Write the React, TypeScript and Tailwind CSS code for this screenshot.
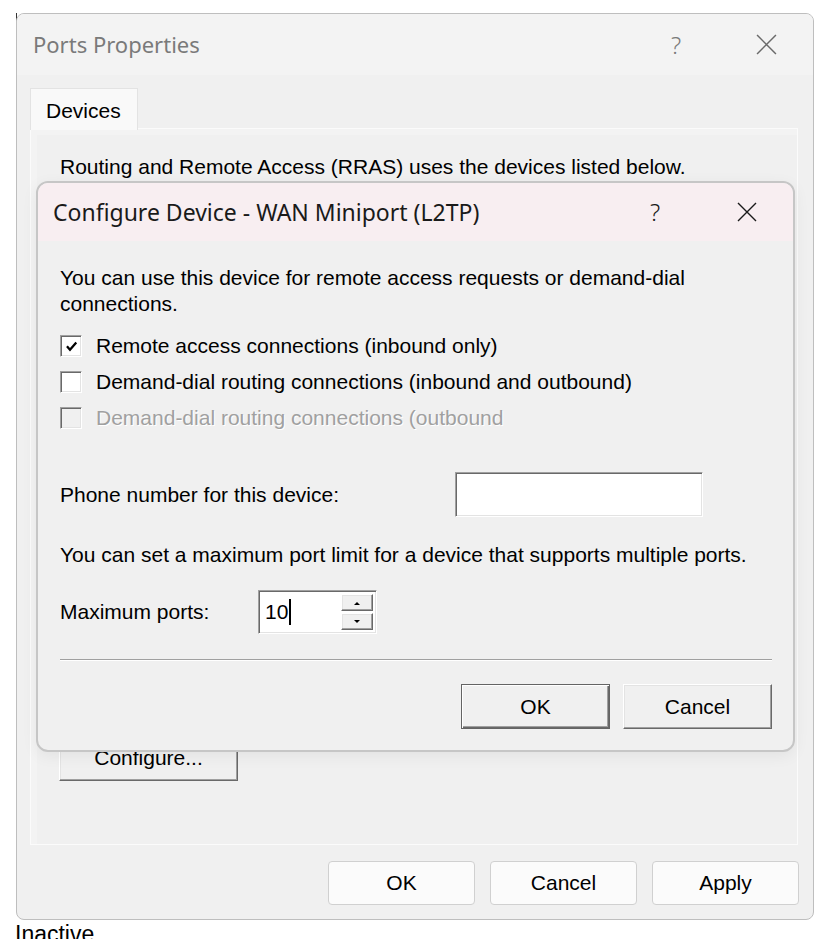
import React from "react"

/* classic 3D edges */
const sunken =
  "border border-t-[#a0a0a0] border-l-[#a0a0a0] border-b-white border-r-white shadow-[inset_1px_1px_0_#696969,inset_-1px_-1px_0_#e3e3e3]"
const raised =
  "border border-t-white border-l-white border-b-[#696969] border-r-[#696969] shadow-[inset_-1px_-1px_0_#a0a0a0,inset_1px_1px_0_#e3e3e3]"

function CloseGlyph({ size, color }: { size: number; color: string }) {
  return (
    <svg width={size} height={size} viewBox="0 0 20 20" fill="none">
      <path d="M1 1 L19 19 M19 1 L1 19" stroke={color} strokeWidth="1.4" />
    </svg>
  )
}

function Checkbox({ checked, disabled }: { checked?: boolean; disabled?: boolean }) {
  return (
    <div
      className={`w-[22px] h-[22px] flex items-center justify-center ${sunken} ${
        disabled ? "bg-[#f0f0f0]" : "bg-white"
      }`}
    >
      {checked && (
        <svg width="13" height="13" viewBox="0 0 12 12" fill="none">
          <path d="M1.8 5.8 L4.6 9 L10.4 2.4" stroke="#000" strokeWidth="2.1" />
        </svg>
      )}
    </div>
  )
}

function SpinArrow({ up }: { up?: boolean }) {
  return (
    <div className={`flex-1 flex items-center justify-center bg-[#f0f0f0] ${raised}`}>
      <svg width="6" height="4" viewBox="0 0 6 4">
        <path d={up ? "M0 4 L3 1 L6 4 Z" : "M0 0 L6 0 L3 3 Z"} fill="#000" />
      </svg>
    </div>
  )
}

function ConfigureDevice() {
  const options = [
    { label: "Remote access connections (inbound only)", checked: true },
    { label: "Demand-dial routing connections (inbound and outbound)" },
    { label: "Demand-dial routing connections (outbound", disabled: true },
  ]

  return (
    <div className="absolute left-[36px] top-[181px] w-[759px] h-[571px] rounded-[12px] border-2 border-[#c6c6c6] bg-[#f0f0f0] overflow-hidden shadow-[0_4px_16px_rgba(0,0,0,0.06)]">
      {/* title bar */}
      <div className="h-[58px] bg-[#f8eef1] flex items-center pl-[15px]">
        <div className="flex-1 font-['Noto_Sans',sans-serif] text-[23px] text-[#1a1a1a]">
          Configure Device - WAN Miniport (L2TP)
        </div>
        <div className="w-[92px] flex justify-center font-['Noto_Sans',sans-serif] text-[24px] font-light text-[#1a1a1a]">
          ?
        </div>
        <div className="w-[92px] flex justify-center">
          <CloseGlyph size={20} color="#1a1a1a" />
        </div>
      </div>

      {/* body */}
      <div className="pl-[22px] pr-[21px] text-[21px] leading-[26px] text-black">
        <p className="mt-[24px]">
          You can use this device for remote access requests or demand-dial
          <br />
          connections.
        </p>

        <div className="mt-[11px] flex flex-col">
          {options.map((o) => (
            <div key={o.label} className="h-[36px] flex items-center gap-[14px]">
              <Checkbox checked={o.checked} disabled={o.disabled} />
              <span
                className={
                  o.disabled
                    ? "text-[#a0a0a0] [text-shadow:1px_1px_0_#ffffff]"
                    : ""
                }
              >
                {o.label}
              </span>
            </div>
          ))}
        </div>

        <div className="mt-[36px] h-[45px] flex items-center">
          <span className="w-[395px]">Phone number for this device:</span>
          <div className={`w-[248px] h-[45px] bg-white ${sunken}`} />
        </div>

        <p className="mt-[25px]">
          You can set a maximum port limit for a device that supports multiple ports.
        </p>

        <div className="mt-[22px] h-[44px] flex items-center">
          <span className="w-[198px]">Maximum ports:</span>
          <div className={`w-[119px] h-[44px] bg-white flex items-center pl-[6px] pr-[3px] ${sunken}`}>
            <span className="flex-1 flex items-center">
              10<span className="inline-block w-[2px] h-[26px] bg-black ml-[1px]" />
            </span>
            <div className="w-[32px] h-[36px] flex flex-col gap-[2px]">
              <SpinArrow up />
              <SpinArrow />
            </div>
          </div>
        </div>

        <div className="mt-[25px] h-[2px] border-t border-t-[#a0a0a0] border-b border-b-white" />

        <div className="mt-[23px] flex justify-end gap-[13px]">
          <button className="w-[149px] h-[45px] bg-[#f0f0f0] border border-[#646464] shadow-[inset_1px_1px_0_#ffffff,inset_-1px_-1px_0_#696969,inset_-2px_-2px_0_#a0a0a0]">
            OK
          </button>
          <button className={`w-[149px] h-[45px] bg-[#f0f0f0] ${raised}`}>Cancel</button>
        </div>
      </div>
    </div>
  )
}

export default function App() {
  const footer = ["OK", "Cancel", "Apply"]

  return (
    <div className="relative w-[823px] h-[939px] bg-white overflow-hidden font-['Liberation_Sans',Arial,sans-serif] text-black">
      <div className="absolute left-[16px] top-[13px] w-[1px] h-[17px] bg-[#333]" />

      {/* Ports Properties window */}
      <div className="absolute left-[16px] top-[13px] w-[798px] h-[907px] rounded-[8px] border border-[#bebebe] bg-[#f0f0f0] overflow-hidden">
        <div className="h-[61px] bg-[#f3f3f3] flex items-center pl-[16px]">
          <div className="flex-1 font-['Noto_Sans',sans-serif] text-[22px] text-[#7a7a7a]">
            Ports Properties
          </div>
          <div className="w-[86px] flex justify-center font-['Noto_Sans',sans-serif] text-[24px] font-light text-[#7a7a7a]">
            ?
          </div>
          <div className="w-[94px] flex justify-center">
            <CloseGlyph size={21} color="#6a6a6a" />
          </div>
        </div>

        <div className="pl-[13px] pr-[14px]">
          {/* tab strip */}
          <div className="mt-[13px] flex">
            <div className="relative z-10 w-[108px] h-[42px] -mb-[2px] bg-[#f9f9f9] border border-b-0 border-[#e3e3e3] pl-[15px] pt-[6px] text-[21px]">
              Devices
            </div>
          </div>

          {/* tab panel */}
          <div className="w-[768px] h-[717px] border border-[#fbfbfb] bg-[#f0f0f0] shadow-[inset_6px_6px_0_#f3f3f3] pl-[28px] text-[21px] leading-[24px]">
            <p className="mt-[26px] pl-[1px]">
              Routing and Remote Access (RRAS) uses the devices listed below.
            </p>
            <button className={`mt-[556px] w-[179px] h-[46px] bg-[#f0f0f0] ${raised}`}>
              Configure...
            </button>
          </div>

          {/* footer buttons */}
          <div className="mt-[16px] flex justify-end gap-[15px]">
            {footer.map((b) => (
              <button
                key={b}
                className="w-[147px] h-[44px] rounded-[4px] border border-[#d0d0d0] bg-[#fbfbfb] text-[21px]"
              >
                {b}
              </button>
            ))}
          </div>
        </div>
      </div>

      <ConfigureDevice />

      <div className="absolute left-[15px] top-[919px] text-[23px] leading-[30px]">Inactive</div>
    </div>
  )
}
